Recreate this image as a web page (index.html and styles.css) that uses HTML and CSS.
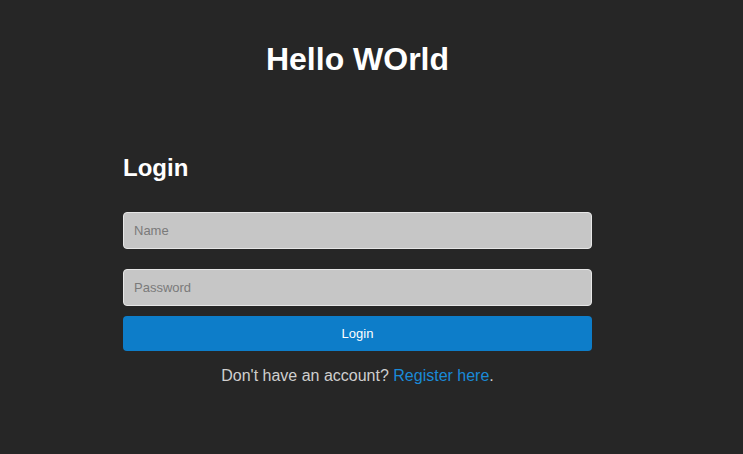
FILE: index.html
```html
<!DOCTYPE html>
<html>
<head>
<meta charset="utf-8">
<link rel="stylesheet" href="styles.css">
</head>
<body>
<div class="page">
  <h1 class="title">Hello WOrld</h1>
  <form class="login">
    <h2 class="login-title">Login</h2>
    <input class="field field-name" type="text" placeholder="Name">
    <input class="field field-pass" type="password" placeholder="Password">
    <button class="btn" type="button">Login</button>
    <p class="note">Don't have an account? <a class="link" href="#">Register here</a>.</p>
  </form>
</div>
</body>
</html>
```
FILE: styles.css
```css
html, body {
  margin: 0;
  padding: 0;
  background: #262626;
  height: 100%;
}
body {
  font-family: "Liberation Sans", Arial, sans-serif;
  color: #fff;
}
.page {
  width: 469px;
  margin-left: 123px;
  padding-top: 1px;
}
.title {
  font-size: 32px;
  font-weight: bold;
  text-align: center;
  margin: 40px 0 0;
  line-height: 37px;
}
.login {
  display: flex;
  flex-direction: column;
  margin-top: 76px;
}
.login-title {
  font-size: 24px;
  font-weight: bold;
  margin: 0 0 30px;
  line-height: 28px;
}
.field {
  box-sizing: border-box;
  height: 37px;
  width: 100%;
  background: #c6c6c6;
  border: 1px solid #e6e6e6;
  border-radius: 4px;
  padding: 0 10px;
  font-family: "Liberation Sans", Arial, sans-serif;
  font-size: 13px;
  color: #333;
  outline: none;
}
.field::placeholder {
  color: #7a7a7a;
}
.field-name {
  margin-bottom: 20px;
}
.field-pass {
  margin-bottom: 10px;
}
.btn {
  height: 35px;
  width: 100%;
  background: #0d7dc9;
  border: none;
  border-radius: 4px;
  color: #fff;
  font-family: "Liberation Sans", Arial, sans-serif;
  font-size: 13px;
  cursor: pointer;
}
.note {
  text-align: center;
  font-size: 16px;
  color: #cfcfcf;
  margin: 15px 0 0;
  line-height: 20px;
}
.link {
  color: #1a8ad6;
  text-decoration: none;
}
```
